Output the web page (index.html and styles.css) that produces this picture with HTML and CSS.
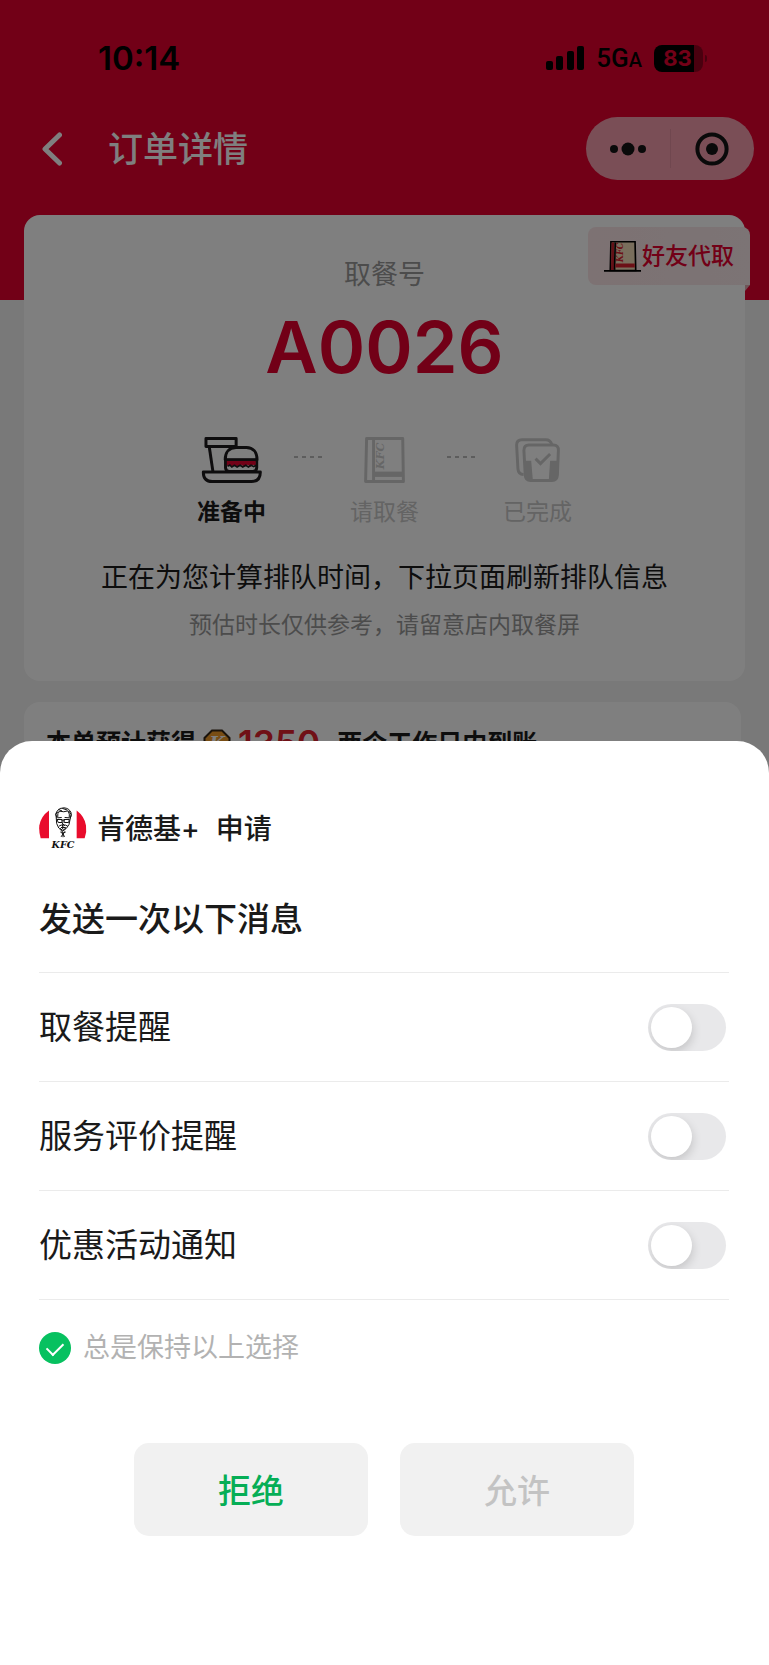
FILE: index.html
```
<!DOCTYPE html>
<html lang="zh-CN">
<head>
    <meta charset="UTF-8">
    <meta name="viewport" content="width=device-width, initial-scale=1.0">
    <title>订单详情</title>
    <link rel="stylesheet" href="styles.css">
</head>
<body>

    <header class="top">
        <!-- 状态栏 -->
        <div class="status-bar">
            <span class="time">10:14</span>
            <div class="status-icons">
                <svg class="signal" viewBox="0 0 38 24" aria-hidden="true">
                    <rect x="0" y="15" width="7" height="9" rx="2"/>
                    <rect x="10" y="10" width="7" height="14" rx="2"/>
                    <rect x="21" y="5" width="7" height="19" rx="2"/>
                    <rect x="31" y="0" width="7" height="24" rx="2"/>
                </svg>
                <span class="network">5G<small>A</small></span>
                <span class="battery">83</span>
            </div>
        </div>

        <!-- 导航栏 -->
        <nav class="nav">
            <button class="back" aria-label="返回">
                <svg viewBox="0 0 20 34"><path d="M17.500 3 3 17 17.500 31"/></svg>
            </button>
            <h1>订单详情</h1>
            <div class="capsule">
                <button aria-label="更多">
                    <svg class="dots" viewBox="0 0 38 14">
                        <circle cx="5" cy="7" r="4"/>
                        <circle cx="19" cy="7" r="6.500"/>
                        <circle cx="33" cy="7" r="4"/>
                    </svg>
                </button>
                <button aria-label="关闭">
                    <svg class="target" viewBox="0 0 34 34">
                        <circle cx="17" cy="17" r="14.600" fill="none" stroke="#151515" stroke-width="4"/>
                        <circle cx="17" cy="17" r="6"/>
                    </svg>
                </button>
            </div>
        </nav>
    </header>

    <main>
        <!-- 取餐号 -->
        <section class="card pickup">
            <a class="friend" href="#">
                <svg viewBox="656 718 118 102" aria-hidden="true">
                    <path d="M680 726H753L755 813H678Z" fill="#f3ddb8" stroke="#000" stroke-width="5"/>
                    <path d="M682 728H690L689 811H680Z" fill="#c8202c"/>
                    <path d="M693 728 691 811" stroke="#000" stroke-width="5"/>
                    <path d="M694 792H752V804H693Z" fill="#d8202c"/>
                    <path d="M659 814H771" stroke="#000" stroke-width="5"/>
                    <text transform="translate(715 788) rotate(-90)" font-size="25" fill="#d8202c">KFC</text>
                </svg>
                <span>好友代取</span>
            </a>
            <p class="label">取餐号</p>
            <p class="number">A0026</p>

            <ol class="steps">
                <li class="step active">
                    <svg viewBox="62 76 184 144" aria-hidden="true">
                        <g fill="none" stroke="#1c1a1c" stroke-width="9" stroke-linejoin="round">
                            <path d="M77 83H168V107H77Z"/>
                            <path d="M87 109 98 183"/>
                            <path d="M135 147C135 124 148 110 168 110H199C219 110 231 124 231 147Z"/>
                            <path d="M136 149H230V172Q229 183 218 183H148Q137 183 136 172Z"/>
                            <path d="M69 184H241Q241 213 214 213H96Q69 213 69 184Z"/>
                        </g>
                        <path d="M140 151H227V165L219 162 212 168 202 162 193 168 183 162 173 168 163 162 153 168 146 162 140 166Z" fill="#e4002e"/>
                        <path d="M142 167 149 163 155 169 163 164 171 169 180 164 188 169 197 164 205 169 213 164 221 168 228 164" fill="none" stroke="#1c1a1c" stroke-width="5"/>
                    </svg>
                    <span>准备中</span>
                </li>
                <li class="line"></li>
                <li class="step">
                    <svg viewBox="522 76 184 144" aria-hidden="true">
                        <g fill="none" stroke="#cdcdcd" stroke-width="9" stroke-linejoin="round">
                            <path d="M560 83H669L671 213H557Z"/>
                            <path d="M581 84V212"/>
                        </g>
                        <path d="M582 183H669V199H582Z" fill="#cdcdcd"/>
                        <text transform="translate(612 176) rotate(-90)" font-size="34" fill="#cdcdcd">KFC</text>
                    </svg>
                    <span>请取餐</span>
                </li>
                <li class="line"></li>
                <li class="step">
                    <svg viewBox="980 76 184 144" aria-hidden="true">
                        <g fill="none" stroke="#cdcdcd" stroke-width="9" stroke-linejoin="round">
                            <path d="M1030 192Q1014 191 1013 175L1009 103Q1009 87 1025 87H1097Q1111 87 1115 101"/>
                            <path d="M1046 103H1120Q1136 103 1135 119L1132 194Q1131 210 1116 210H1051Q1036 210 1035 194L1031 119Q1031 103 1046 103Z"/>
                            <path d="M1066 144 1081 159 1110 130" stroke-linejoin="miter"/>
                        </g>
                        <path d="M1033 150H1053L1058 209H1044Q1036 206 1035 194Z" fill="#cdcdcd"/>
                        <path d="M1110 150H1134L1132 194Q1131 206 1122 209H1106Z" fill="#cdcdcd"/>
                    </svg>
                    <span>已完成</span>
                </li>
            </ol>

            <p class="queue">正在为您计算排队时间，下拉页面刷新排队信息</p>
            <p class="hint">预估时长仅供参考，请留意店内取餐屏</p>
        </section>

        <!-- 积分 -->
        <section class="card points">
            <span>本单预计获得</span>
            <svg viewBox="0 0 28 28" aria-hidden="true">
                <path d="M9 1.500H19L26.500 9V19L19 26.500H9L1.500 19V9Z" fill="#f09a28" stroke="#332414" stroke-width="2"/>
                <text x="14" y="21" font-size="18" text-anchor="middle" fill="#fff">K</text>
            </svg>
            <strong>1350</strong>
            <span>两个工作日内到账</span>
        </section>
    </main>

    <!-- 订阅消息弹窗 -->
    <div class="mask">
        <form class="sheet" role="dialog" aria-labelledby="sheet-title">
            <div class="app">
                <svg viewBox="117 75 144 128" aria-hidden="true">
                    <path d="M147 85V168H122Q116 148 118 130 122 103 147 85Z" fill="#e90c2c"/>
                    <path d="M230 85V168H254Q261 148 258 130 254 103 230 85Z" fill="#e90c2c"/>
                    <g fill="none" stroke="#111" stroke-width="3" stroke-linecap="round" stroke-linejoin="round">
                        <path d="M170 106Q163 96 171 87 179 76 192 77 207 78 213 91 216 100 211 108"/>
                        <path d="M173 105Q171 92 179 87 191 91 204 86 210 95 208 106"/>
                        <path d="M168 97 170 124Q174 139 187 148 201 140 207 127L213 98"/>
                        <path d="M176 82 185 86M188 79 200 83M174 89 168 95M207 87 212 95"/>
                        <path d="M172 112H186V121H176ZM193 112H208L206 121H194ZM186 114H193M174 107 184 106M195 106 206 107"/>
                        <path d="M189 119 187 127 192 127M178 131Q184 126 190 131 196 126 202 131M184 136H196M181 139 188 145 197 138M188 132V140"/>
                        <path d="M186 149 193 163M193 149 184 163M182 150 188 154 196 150M189 154V164"/>
                    </g>
                    <text x="189" y="198" font-size="29" text-anchor="middle" fill="#111">KFC</text>
                </svg>
                <strong>肯德基+</strong>
                <strong>申请</strong>
            </div>
            <h2 id="sheet-title">发送一次以下消息</h2>

            <div class="row">
                <label for="pickup">取餐提醒</label>
                <input type="checkbox" role="switch" id="pickup">
            </div>
            <div class="row">
                <label for="review">服务评价提醒</label>
                <input type="checkbox" role="switch" id="review">
            </div>
            <div class="row">
                <label for="promo">优惠活动通知</label>
                <input type="checkbox" role="switch" id="promo">
            </div>

            <div class="keep">
                <input type="checkbox" id="keep" checked>
                <label for="keep">总是保持以上选择</label>
            </div>

            <div class="actions">
                <button type="button">拒绝</button>
                <button type="button" disabled>允许</button>
            </div>
        </form>
    </div>

</body>
</html>
```

FILE: styles.css
```
* {
    box-sizing: border-box;
}
body {
    margin: 0;
    background-color: #f3f3f3;
    color: #1a1a1a;
    font-family: Inter, "Noto Sans CJK SC", sans-serif;
}
h1, h2, p, ol {
    margin: 0;
    padding: 0;
    font-weight: 400;
}
button {
    border: 0;
    padding: 0;
    background: none;
    font-family: inherit;
    cursor: pointer;
}
svg {
    display: block;
    flex: none;
}
svg text {
    font-family: "DejaVu Serif", "Liberation Serif", serif;
    font-weight: bold;
    font-style: italic;
}

/* 顶部 */
.top {
    padding: 38px 15px 120px 42px;
    background-color: #e4002e;
}
.status-bar {
    display: flex;
    justify-content: space-between;
    align-items: center;
    height: 40px;
    padding: 0 51px 0 56px;
    color: #000;
}
.time {
    font-size: 33px;
    font-weight: 600;
}
.status-icons {
    display: flex;
    align-items: center;
    gap: 12px;
}
.signal {
    width: 38px;
    height: 24px;
}
.network {
    font-family: Roboto, sans-serif;
    font-size: 26px;
    font-weight: 500;
}
.network small {
    font-size: 20px;
}
.battery {
    width: 49px;
    height: 27px;
    padding-right: 2px;
    border-radius: 8px;
    background: linear-gradient(to right, #000 40px, rgba(0, 0, 0, 0.35) 40px);
    color: #e4002e;
    font-size: 22px;
    font-weight: 700;
    line-height: 27px;
    text-align: center;
    position: relative;
}
.battery::after {
    content: "";
    position: absolute;
    left: 51px;
    top: 10px;
    width: 2px;
    height: 7px;
    border-radius: 0 2px 2px 0;
    background-color: rgba(0, 0, 0, 0.35);
}
.nav {
    display: flex;
    align-items: center;
    margin-top: 39px;
}
.back svg {
    width: 20px;
    height: 34px;
    fill: none;
    stroke: #fff;
    stroke-width: 5;
    stroke-linecap: round;
    stroke-linejoin: round;
}
.nav h1 {
    flex: 1;
    margin-left: 46px;
    color: #fff;
    font-size: 35px;
    font-weight: 500;
    line-height: 48px;
}
.capsule {
    display: flex;
    width: 168px;
    height: 63px;
    border-radius: 32px;
    background-color: rgba(255, 255, 255, 0.61);
}
.capsule button {
    flex: 1;
    display: flex;
    align-items: center;
    justify-content: center;
}
.capsule button + button {
    position: relative;
}
.capsule button + button::before {
    content: "";
    position: absolute;
    left: 0;
    top: 12px;
    bottom: 12px;
    width: 1px;
    background-color: rgba(0, 0, 0, 0.08);
}
.capsule svg {
    fill: #151515;
}
.dots {
    width: 38px;
    height: 14px;
}
.target {
    width: 34px;
    height: 34px;
}

/* 卡片 */
main {
    margin-top: -85px;
    padding: 0 24px;
}
.card {
    border-radius: 16px;
    background-color: #fff;
}
.pickup {
    position: relative;
    padding: 42px 24px 40px;
    text-align: center;
}
.friend {
    position: absolute;
    top: 12px;
    right: -5px;
    display: flex;
    align-items: center;
    height: 58px;
    padding: 0 16px 0 15px;
    border-radius: 8px 8px 0 8px;
    background: linear-gradient(to right, #fae4e6, #f8e8ea);
    color: #e4002e;
    font-size: 23px;
    font-weight: 500;
    line-height: 32px;
    text-decoration: none;
}
.friend svg {
    width: 39px;
    height: 34px;
}
/* 折角 */
.friend::after {
    content: "";
    position: absolute;
    right: 0;
    top: 100%;
    border-top: 6px solid #e0a8b0;
    border-right: 5px solid transparent;
}
.label {
    color: #999;
    font-size: 27px;
    line-height: 36px;
}
.number {
    margin-top: 14px;
    color: #e4002e;
    font-size: 72px;
    font-weight: 600;
    line-height: 80px;
}
.steps {
    display: flex;
    justify-content: center;
    gap: 28px;
    margin-top: 49px;
    list-style: none;
}
.step {
    display: flex;
    flex-direction: column;
    align-items: center;
    gap: 12px;
    color: #c8c8c8;
    font-size: 23px;
    line-height: 32px;
}
.step svg {
    width: 61px;
    height: 48px;
}
.step.active {
    color: #1a1a1a;
    font-weight: 700;
}
.line {
    width: 28px;
    height: 2px;
    margin-top: 20px;
    background: repeating-linear-gradient(to right, #bbb 0 4px, transparent 4px 8px);
}
.queue {
    margin-top: 32px;
    font-size: 27px;
    line-height: 36px;
}
.hint {
    margin-top: 13px;
    color: #999;
    font-size: 23px;
    line-height: 32px;
}
.points {
    display: flex;
    align-items: center;
    margin: 21px 4px 0 0;
    padding: 19px 22px;
    font-size: 25px;
    font-weight: 700;
    line-height: 44px;
}
.points svg {
    width: 28px;
    height: 28px;
    margin: 0 7px;
}
.points strong {
    margin-right: 17px;
    color: #e0202c;
    font-size: 35px;
    font-weight: 600;
}

/* 弹窗 */
.mask {
    position: fixed;
    inset: 0;
    display: flex;
    align-items: flex-end;
    background-color: rgba(0, 0, 0, 0.5);
}
.sheet {
    flex: 1;
    padding: 66px 40px 129px 39px;
    border-radius: 32px 32px 0 0;
    background-color: #fff;
}
.app {
    display: flex;
    align-items: center;
    gap: 10px;
    font-size: 28px;
    line-height: 40px;
}
.app svg {
    width: 48px;
    height: 43px;
}
.app strong {
    font-weight: 500;
}
.app strong + strong {
    margin-left: 6px;
}
.sheet h2 {
    margin-top: 45px;
    padding-bottom: 29px;
    border-bottom: 1px solid #ebebeb;
    font-size: 33px;
    font-weight: 500;
    line-height: 48px;
}
.row {
    display: flex;
    justify-content: space-between;
    align-items: center;
    padding: 31px 3px 30px 0;
    border-bottom: 1px solid #ebebeb;
    font-size: 33px;
    line-height: 47px;
}
.row input {
    appearance: none;
    width: 78px;
    height: 47px;
    margin: 0;
    padding: 3px;
    border-radius: 24px;
    background-color: #e8e8ea;
    overflow: hidden;
    cursor: pointer;
}
.row input::before {
    content: "";
    display: block;
    width: 41px;
    height: 41px;
    border-radius: 50%;
    background-color: #fff;
    box-shadow: 1px 4px 10px rgba(0, 0, 0, 0.15);
}
.row input:checked {
    background-color: #07c160;
}
.row input:checked::before {
    margin-left: auto;
}
.keep {
    display: flex;
    align-items: center;
    gap: 12px;
    margin-top: 32px;
    color: #b2b2b2;
    font-size: 27px;
    line-height: 32px;
}
.keep input {
    appearance: none;
    display: flex;
    justify-content: center;
    width: 32px;
    height: 32px;
    margin: 0;
    padding-top: 7px;
    border-radius: 50%;
    background-color: #ddd;
    cursor: pointer;
}
.keep input:checked {
    background-color: #07c160;
}
.keep input:checked::after {
    content: "";
    width: 8px;
    height: 14px;
    border: solid #fff;
    border-width: 0 2px 2px 0;
    transform: rotate(45deg);
}
.actions {
    display: flex;
    justify-content: center;
    gap: 32px;
    margin-top: 79px;
}
.actions button {
    flex: 0 1 234px;
    padding: 24px 0 21px;
    border-radius: 15px;
    background-color: #f1f1f1;
    color: #06ae56;
    font-size: 33px;
    font-weight: 500;
    line-height: 48px;
}
.actions button:disabled {
    color: #c3c3c3;
}
```
